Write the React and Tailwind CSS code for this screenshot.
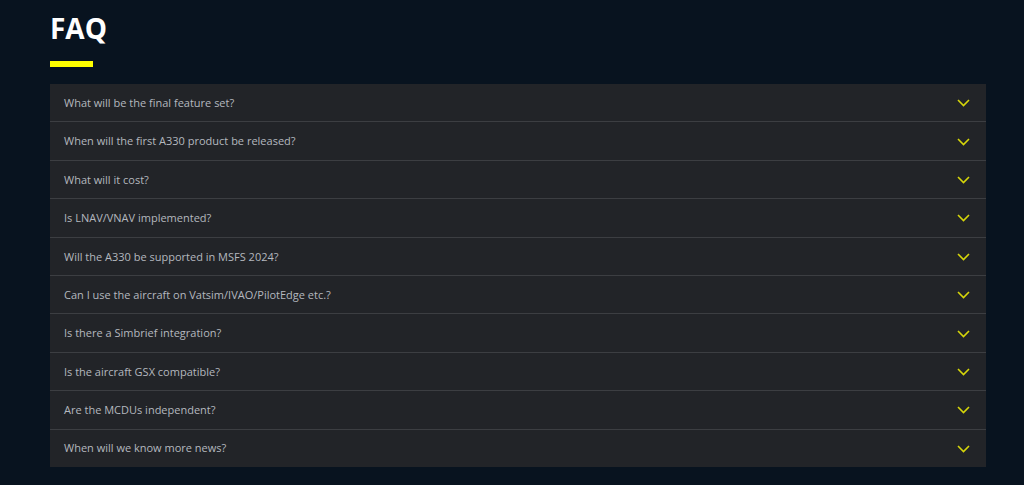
import React from "react";

const questions = [
    "What will be the final feature set?",
    "When will the first A330 product be released?",
    "What will it cost?",
    "Is LNAV/VNAV implemented?",
    "Will the A330 be supported in MSFS 2024?",
    "Can I use the aircraft on Vatsim/IVAO/PilotEdge etc.?",
    "Is there a Simbrief integration?",
    "Is the aircraft GSX compatible?",
    "Are the MCDUs independent?",
    "When will we know more news?",
];

function Chevron() {
    return (
        <svg width="13" height="8" viewBox="0 0 13 8" fill="none">
            <path d="M1 1L6.5 6.5L12 1" stroke="#d6d60a" strokeWidth="1.6" />
        </svg>
    );
}

function App() {
    const [open, setOpen] = React.useState(null);

    return (
        <div className="min-h-[485px] bg-[#08131f] px-[50px] pt-[10px] pb-[19px] font-['Open_Sans',sans-serif]">
            <h2 className="text-[28px] leading-[36px] font-bold text-white">FAQ</h2>
            <div className="mt-[15px] h-[6px] w-[43px] bg-[#ffff00]" />
            <div className="mt-[17px] w-[936px] bg-[#222428]">
                {questions.map((q, i) => (
                    <div
                        key={q}
                        className={i > 0 ? "border-t border-[#3c3e42]" : ""}
                    >
                        <button
                            onClick={() => setOpen(open === i ? null : i)}
                            className="flex h-[37.4px] w-full items-center justify-between pl-[14px] pr-[16px] pt-[1px] text-left"
                        >
                            <span className="text-[11px] text-[#b4b8bf]">{q}</span>
                            <Chevron />
                        </button>
                    </div>
                ))}
            </div>
        </div>
    );
}

export default App;
